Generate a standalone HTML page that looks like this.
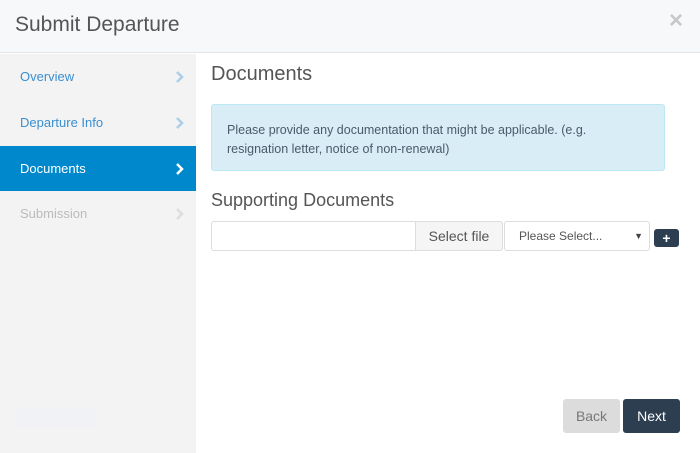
<!DOCTYPE html>
<html><head><style>
*{box-sizing:border-box;margin:0;padding:0}
body{width:700px;height:453px;overflow:hidden;font-family:"Liberation Sans",sans-serif;background:#fff;position:relative}
.hdr{position:absolute;left:0;top:0;width:700px;height:53px;background:#f7f8fa;border-bottom:1px solid #e5e5e5}
.hdr h1{position:absolute;left:15px;top:13px;font-size:21px;font-weight:normal;color:#555}
.x{position:absolute;left:669px;top:7px;font-size:24px;color:#c8c8c8;font-weight:bold}
.side{position:absolute;left:0;top:54px;width:196px;height:399px;background:#f3f3f3}
.it{height:46px;position:relative;font-size:13px;color:#3a8fd0;padding-left:20px;line-height:46px}
.it svg{position:absolute;left:176px;top:17px}
.it.a{background:#0088cc;color:#fff;height:45px}
.it.d{color:#bbb}
h2{position:absolute;left:211px;top:63px;font-size:20px;font-weight:normal;color:#555}
.al{position:absolute;left:211px;top:104px;width:454px;height:67px;background:#d9edf7;border:1px solid #bce8f1;border-radius:3px;padding:16px 15px;font-size:12.5px;line-height:19px;color:#4a5a6a}
h3{position:absolute;left:211px;top:190px;font-size:18px;font-weight:normal;color:#555}
.in{position:absolute;left:211px;top:221px;width:292px;height:30px;border:1px solid #ddd;border-radius:3px}
.sf{position:absolute;left:415px;top:221px;width:88px;height:30px;border:1px solid #ddd;border-radius:0 3px 3px 0;background:#f5f5f5;font-size:14px;color:#555;text-align:center;line-height:28px}
.sel{position:absolute;left:504px;top:221px;width:146px;height:30px;border:1px solid #ddd;border-radius:3px;font-size:12px;color:#555;padding-left:14px;line-height:28px}
.sel span{position:absolute;right:6px;top:0;font-size:9px;color:#444}
.pl{position:absolute;left:654px;top:229px;width:25px;height:18px;background:#2c3e50;border-radius:3px;color:#fff;font-weight:bold;font-size:14px;text-align:center;line-height:18px}
.b{position:absolute;top:399px;width:57px;height:34px;border-radius:3px;font-size:14px;text-align:center;line-height:34px}
.fk{position:absolute;left:15px;width:82px;height:20px;background:#f0f2f5}
</style></head><body>
<div class="hdr"><h1>Submit Departure</h1><div class="x">×</div></div>
<div class="side">
<div class="it">Overview<svg width="8" height="12"><path d="M1 1l5 5-5 5" stroke="#a9cfe8" stroke-width="2.5" fill="none"/></svg></div>
<div class="it">Departure Info<svg width="8" height="12"><path d="M1 1l5 5-5 5" stroke="#a9cfe8" stroke-width="2.5" fill="none"/></svg></div>
<div class="it a">Documents<svg width="8" height="12"><path d="M1 1l5 5-5 5" stroke="#fff" stroke-width="2.5" fill="none"/></svg></div>
<div class="it d">Submission<svg width="8" height="12"><path d="M1 1l5 5-5 5" stroke="#ddd" stroke-width="2.5" fill="none"/></svg></div>
<div class="fk" style="top:353px"></div>
</div>
<h2>Documents</h2>
<div class="al">Please provide any documentation that might be applicable. (e.g. resignation letter, notice of non-renewal)</div>
<h3>Supporting Documents</h3>
<div class="in"></div>
<div class="sf">Select file</div>
<div class="sel">Please Select...<span>▼</span></div>
<div class="pl">+</div>
<div class="b" style="left:563px;background:#dcdcdc;color:#777">Back</div>
<div class="b" style="left:623px;background:#2c3e50;color:#fff">Next</div>
</body></html>
